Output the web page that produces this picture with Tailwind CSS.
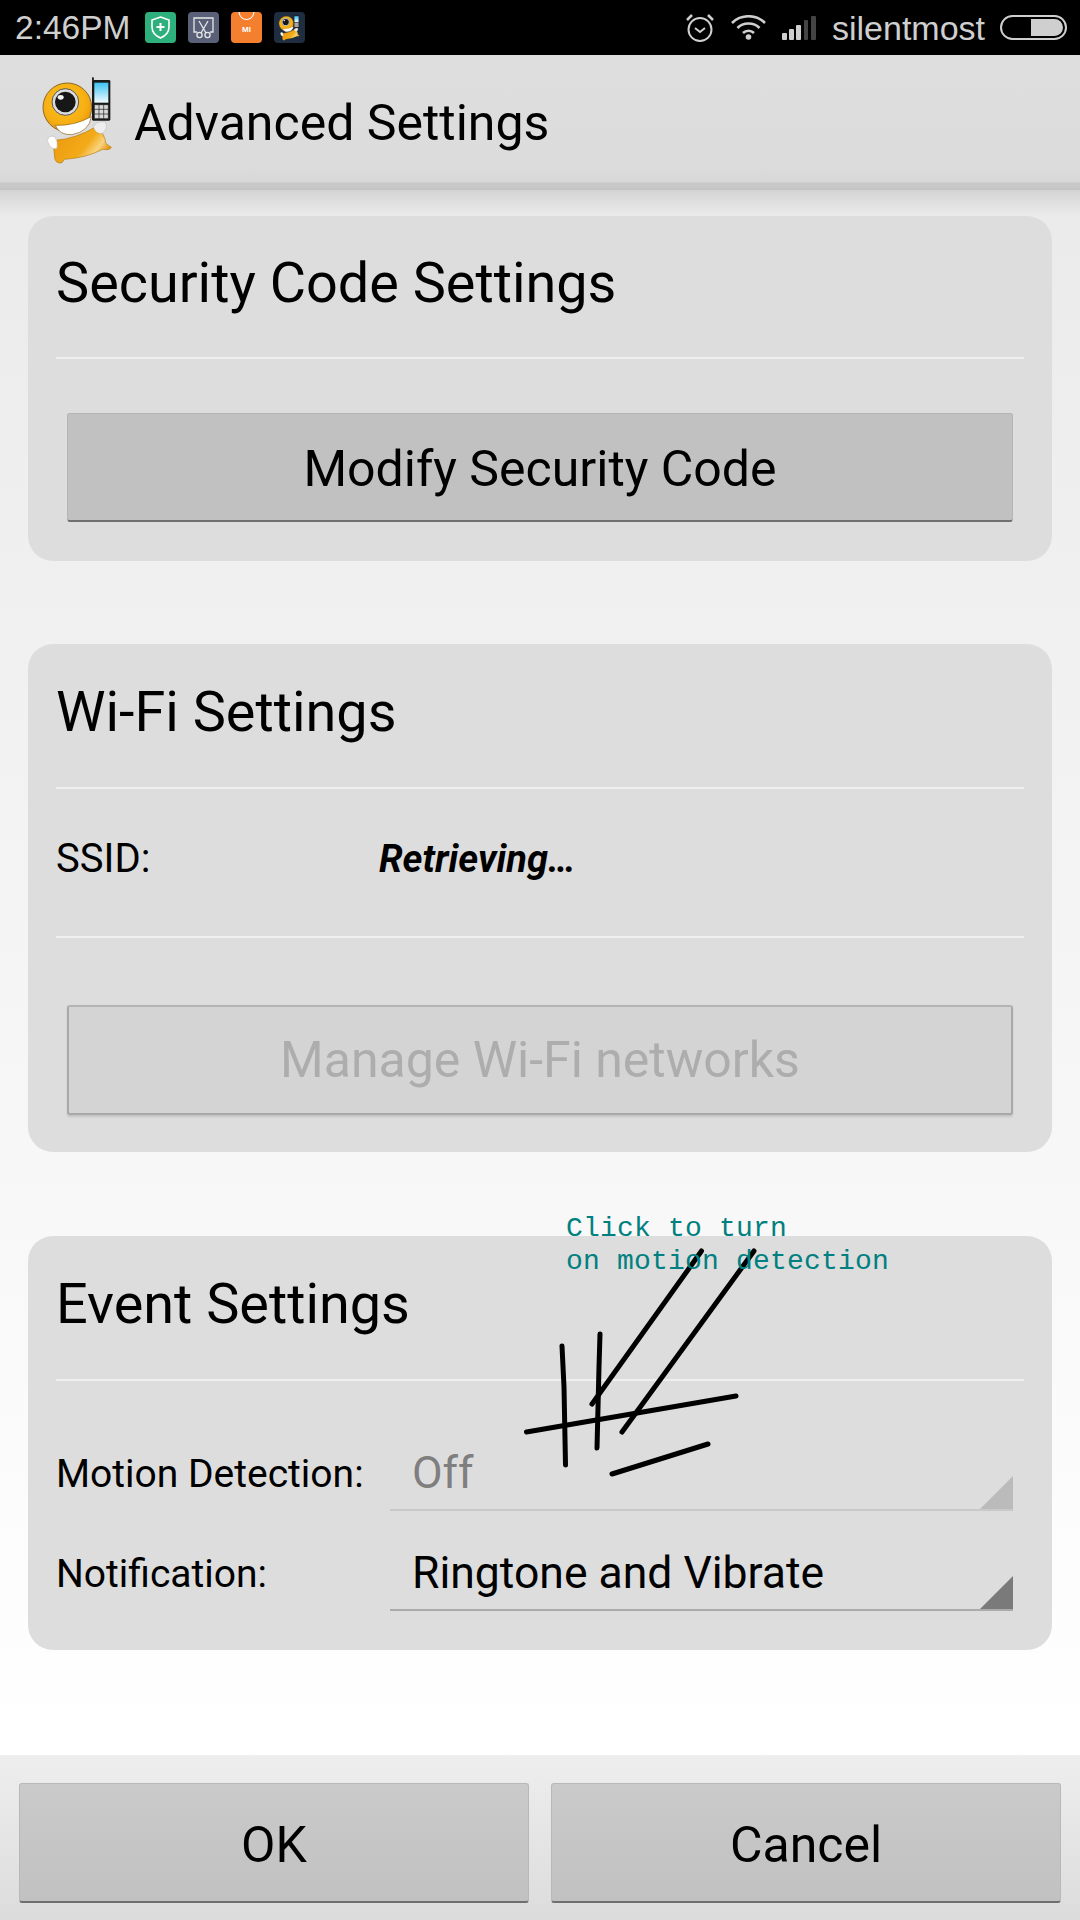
<!DOCTYPE html>
<html>
<head>
    <meta charset="utf-8">
    <title>Advanced Settings</title>
    <script src="https://cdn.jsdelivr.net/npm/@tailwindcss/browser@4"></script>
</head>
<body class="m-0 bg-white">
<svg class="absolute w-0 h-0" xmlns="http://www.w3.org/2000/svg">
    <defs>
        <radialGradient id="head" cx="0.45" cy="0.4" r="0.65">
            <stop offset="0" stop-color="#fbc21f"/>
            <stop offset="0.7" stop-color="#f6ae12"/>
            <stop offset="1" stop-color="#e08f0c"/>
        </radialGradient>
        <linearGradient id="body" x1="0" y1="0" x2="1" y2="0.5">
            <stop offset="0" stop-color="#e8980f"/>
            <stop offset="0.65" stop-color="#f3aa18"/>
            <stop offset="0.85" stop-color="#f8d480"/>
            <stop offset="1" stop-color="#e8980f"/>
        </linearGradient>
        <linearGradient id="screen" x1="0" y1="0" x2="0" y2="1">
            <stop offset="0" stop-color="#3cc4f4"/>
            <stop offset="1" stop-color="#f2fbfe"/>
        </linearGradient>
        <symbol id="mascot" viewBox="0 0 252 300">
            <path d="M58 205 Q120 200 178 165 Q205 180 210 215 L226 226 Q222 236 200 232 Q150 258 85 262 L78 272 Q62 276 57 262 Q50 235 58 205 Z" fill="url(#body)" stroke="#b37c10" stroke-width="2"/>
            <circle cx="94" cy="106" r="73" fill="url(#head)" stroke="#8a6a2a" stroke-width="3"/>
            <circle cx="88" cy="90" r="40" fill="#dcdcdc" stroke="#555" stroke-width="3"/>
            <circle cx="88" cy="90" r="31" fill="#171717"/>
            <ellipse cx="74" cy="76" rx="9" ry="7" fill="#f4f4f4"/>
            <path d="M58 160 Q115 162 166 134 Q160 178 108 188 Q70 190 58 160 Z" fill="#fff" stroke="#8a6414" stroke-width="2"/>
            <path d="M168 16 L173 16 L174 26 L168 26 Z" fill="#222"/>
            <rect x="168" y="24" width="55" height="122" rx="4" fill="#1a1a1a"/>
            <rect x="175" y="32" width="42" height="60" fill="url(#screen)"/>
            <path d="M175 98 H217 V140 H175 Z M175 112 H217 M175 126 H217 M189 98 V140 M203 98 V140" stroke="#1a1a1a" stroke-width="2" fill="#d8d8d8"/>
            <path d="M172 165 Q180 146 208 150 Q218 168 200 184 Q180 188 172 165 Z" fill="#eeeeee" stroke="#999" stroke-width="1"/>
            <path d="M34 205 Q40 188 56 194 Q68 210 62 230 Q42 234 34 205 Z" fill="#fff" stroke="#999" stroke-width="1"/>
        </symbol>
    </defs>
</svg>

<div class="relative w-[1080px] h-[1920px] flex flex-col overflow-hidden font-['Roboto',sans-serif] text-black">
    <!-- status bar -->
    <div class="h-[55px] bg-black flex items-center text-[#cfcfcf] font-['Liberation_Sans',sans-serif] shrink-0">
        <span class="ml-[15px] text-[33.5px] leading-none w-[130px]">2:46PM</span>
        <div class="flex gap-[12px]">
            <div class="w-[31px] h-[31px] rounded-[4px] bg-[#2eb07c] flex items-center justify-center">
                <svg width="19" height="23" viewBox="0 0 19 23" fill="none" stroke="#fff" stroke-width="1.6"><path d="M9.5 1 L18 4 V11 C18 16 14 20 9.5 22 C5 20 1 16 1 11 V4 Z"/><path d="M9.5 7 V15 M5.5 11 H13.5" stroke-width="2"/></svg>
            </div>
            <div class="w-[31px] h-[31px] rounded-[4px] bg-[#5a6078] flex items-center justify-center">
                <svg width="23" height="23" viewBox="0 0 23 23" fill="none" stroke="#e8e8e8" stroke-width="1.3"><path d="M5 16 H2 V2 H21 V16 H18"/><path d="M7 5 L14 17 M16 5 L9 17"/><circle cx="7.5" cy="19" r="2.6"/><circle cx="15.5" cy="19" r="2.6"/></svg>
            </div>
            <div class="relative w-[31px] h-[31px] rounded-[4px] bg-[#f47f2e] flex items-center justify-center overflow-hidden">
                <svg class="absolute top-0 left-[7px]" width="17" height="10" viewBox="0 0 17 10" fill="none" stroke="#fff" stroke-width="1.2"><path d="M1 0 C2 10 15 10 16 0"/></svg>
                <span class="text-[8px] font-bold leading-none text-white mt-[4px]">MI</span>
            </div>
            <div class="w-[31px] h-[31px] rounded-[4px] bg-[#1e2e40] flex items-center justify-center">
                <svg width="27" height="30"><use href="#mascot"/></svg>
            </div>
        </div>
        <div class="ml-auto flex items-center">
            <svg width="28" height="28" viewBox="0 0 28 28" fill="none" stroke="#cfcfcf" stroke-width="2"><circle cx="14" cy="15.5" r="11.5"/><path d="M9 14 L14 18 L19 14"/><path d="M1 6 L6 1 M22 1 L27 6" stroke-width="2.5"/></svg>
            <svg class="ml-[17px]" width="35" height="25" viewBox="0 0 35 25" fill="none" stroke="#cfcfcf" stroke-width="2.6"><path d="M1 8 C10 -1 25 -1 34 8"/><path d="M6.5 13 C12 7 23 7 28.5 13"/><path d="M12 18 C15 15 20 15 23 18"/><circle cx="17.5" cy="22" r="2.8" fill="#cfcfcf" stroke="none"/></svg>
            <svg class="ml-[16px]" width="34" height="24" viewBox="0 0 34 24"><rect x="0" y="17" width="5" height="7" rx="1" fill="#cfcfcf"/><rect x="7" y="13" width="5" height="11" rx="1" fill="#cfcfcf"/><rect x="14" y="9" width="5" height="15" rx="1" fill="#cfcfcf"/><rect x="22" y="4" width="4" height="20" rx="1" fill="#444"/><rect x="29" y="0" width="5" height="24" rx="1" fill="#444"/></svg>
            <span class="ml-[16px] text-[34px] leading-none w-[168px]">silentmost</span>
            <div class="mr-[13px] w-[67px] h-[25px] rounded-full border-2 border-[#cfcfcf] flex justify-end p-[2px]">
                <div class="w-[32px] h-full bg-[#cfcfcf] rounded-r-full"></div>
            </div>
        </div>
    </div>

    <!-- action bar -->
    <div class="relative h-[135px] shrink-0 bg-[linear-gradient(#dedede_0,#dcdcdc_110px,#d8d8d8_127px,#c9c9c9_128px,#c9c9c9_131px,#c3c3c3_135px)]">
        <svg class="absolute left-[36px] top-[17px]" width="84" height="100"><use href="#mascot"/></svg>
        <h1 class="absolute left-[134px] top-[43px] text-[50px] font-normal leading-none">Advanced Settings</h1>
    </div>

    <!-- settings list -->
    <div class="flex-1 bg-[linear-gradient(#d4d4d4_0,#ebebeb_26px,#ffffff_100%)] px-[28px] pt-[26px]">
        <section class="h-[345px] rounded-[25px] bg-[#dddddd] px-[28px] flex flex-col">
            <h2 class="h-[143px] flex items-center text-[55.8px] font-normal leading-none pb-[6px] border-b-2 border-[#f0f0f0]">Security Code Settings</h2>
            <button class="mt-[54px] mx-[11px] h-[109px] pt-[3px] rounded-[3px] bg-[#c1c1c1] border border-[#b4b4b4] border-b-2 border-b-[#6f6f6f] text-[50px] leading-none">Modify Security Code</button>
        </section>

        <section class="mt-[83px] h-[508px] rounded-[25px] bg-[#dddddd] px-[28px] flex flex-col">
            <h2 class="h-[145px] flex items-center text-[55.8px] font-normal leading-none pb-[6px] border-b-2 border-[#f0f0f0]">Wi-Fi Settings</h2>
            <div class="h-[149px] flex items-center border-b-2 border-[#f0f0f0] text-[40px] leading-none pb-[8px]">
                <span class="w-[323px]">SSID:</span>
                <span class="font-bold italic text-[38px]">Retrieving…</span>
            </div>
            <button disabled class="mt-[67px] mx-[11px] h-[110px] pb-[1px] rounded-[3px] bg-[#d4d4d4] border-2 border-[#a8a8a8] border-t-[#b4b4b4] shadow-[0_2px_2px_#c4c4c4] text-[50px] leading-none text-[#adadad]">Manage Wi-Fi networks</button>
        </section>

        <section class="mt-[84px] h-[414px] rounded-[25px] bg-[#dddddd] px-[28px] flex flex-col">
            <h2 class="h-[145px] flex items-center text-[55.8px] font-normal leading-none pb-[5px] border-b-2 border-[#f0f0f0]">Event Settings</h2>
            <div class="flex items-end h-[130px]">
                <span class="w-[334px] text-[39px] leading-none pb-[17px]">Motion Detection:</span>
                <div class="relative mr-[11px] flex-1 h-[70px] border-b-2 border-[#c9c9c9] flex items-center pl-[22px] pb-[3px] text-[#7f7f7f] text-[44.5px] leading-none">
                    Off
                    <div class="absolute right-0 bottom-0 w-[33px] h-[33px] bg-[#bbbbbb] [clip-path:polygon(100%_0,100%_100%,0_100%)]"></div>
                </div>
            </div>
            <div class="flex items-end h-[100px]">
                <span class="w-[334px] text-[39px] leading-none pb-[17px]">Notification:</span>
                <div class="relative mr-[11px] flex-1 h-[70px] border-b-2 border-[#ababab] flex items-center pl-[22px] pb-[3px] text-[44.5px] leading-none">
                    Ringtone and Vibrate
                    <div class="absolute right-0 bottom-0 w-[33px] h-[33px] bg-[#7a7a7a] [clip-path:polygon(100%_0,100%_100%,0_100%)]"></div>
                </div>
            </div>
        </section>
    </div>

    <!-- bottom buttons -->
    <div class="h-[165px] shrink-0 bg-gradient-to-b from-[#eeeeee] to-[#dcdcdc] px-[19px] pt-[28px] flex gap-[22px] items-start">
        <button class="w-[510px] h-[120px] pt-[5px] rounded-[3px] bg-gradient-to-b from-[#cacaca] to-[#c1c1c1] border border-[#b8b8b8] border-b-2 border-b-[#6f6f6f] text-[50px] leading-none">OK</button>
        <button class="w-[510px] h-[120px] pt-[5px] rounded-[3px] bg-gradient-to-b from-[#cacaca] to-[#c1c1c1] border border-[#b8b8b8] border-b-2 border-b-[#6f6f6f] text-[50px] leading-none">Cancel</button>
    </div>

    <!-- hand annotation drawn over the screen -->
    <svg class="absolute left-0 top-0 pointer-events-none" width="1080" height="1920" fill="none" stroke="#000" stroke-width="5" stroke-linecap="round" stroke-linejoin="round">
        <path d="M562 1346 L564 1387 L565.5 1465"/>
        <path d="M600 1334 L599 1367 L597 1448"/>
        <path d="M592 1404 L701.5 1251"/>
        <path d="M622 1432 L754 1251"/>
        <path d="M526.5 1432 L736 1396"/>
        <path d="M612 1474 L708 1444"/>
    </svg>
    <div class="absolute left-[566px] top-[1212px] font-['Liberation_Mono',monospace] text-[28px] tracking-[0.2px] leading-[33px] text-[#008080] whitespace-pre">Click to turn
on motion detection</div>
</div>
</body>
</html>
